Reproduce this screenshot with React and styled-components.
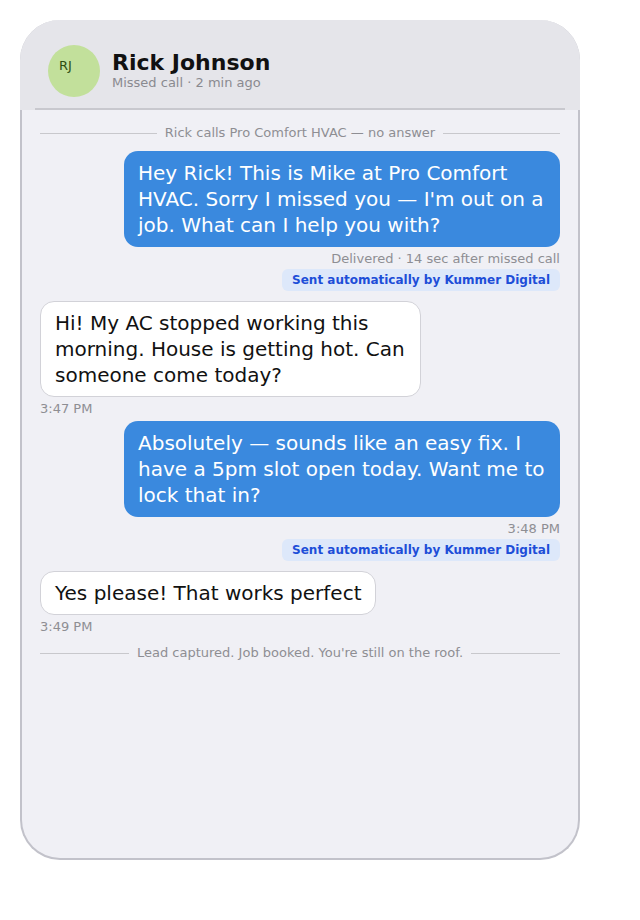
import React from 'react'
import styled, { createGlobalStyle } from 'styled-components'

const GlobalStyle = createGlobalStyle`
  body {
    margin: 0;
    background: #ffffff;
    font-family: "DejaVu Sans", Verdana, sans-serif;
  }
`

const messages = [
  { kind: 'divider', text: 'Rick calls Pro Comfort HVAC — no answer' },
  {
    kind: 'out',
    text: "Hey Rick! This is Mike at Pro Comfort HVAC. Sorry I missed you — I'm out on a job. What can I help you with?",
    meta: 'Delivered · 14 sec after missed call',
    auto: true
  },
  {
    kind: 'in',
    text: 'Hi! My AC stopped working this morning. House is getting hot. Can someone come today?',
    meta: '3:47 PM'
  },
  {
    kind: 'out',
    text: 'Absolutely — sounds like an easy fix. I have a 5pm slot open today. Want me to lock that in?',
    meta: '3:48 PM',
    auto: true
  },
  { kind: 'in', text: 'Yes please! That works perfect', meta: '3:49 PM' },
  { kind: 'divider', text: "Lead captured. Job booked. You're still on the roof." }
]

function App() {
  return (
    <Page>
      <GlobalStyle />
      <Phone>
        <Header>
          <Avatar>RJ</Avatar>
          <Contact>
            <Name>Rick Johnson</Name>
            <Status>Missed call · 2 min ago</Status>
          </Contact>
        </Header>

        <Thread>
          {messages.map((m, i) => {
            if (m.kind === 'divider') {
              return (
                <Divider key={i} $last={i > 0}>
                  <span>{m.text}</span>
                </Divider>
              )
            }
            const out = m.kind === 'out'
            return (
              <Group key={i} $out={out}>
                <Bubble $out={out}>{m.text}</Bubble>
                <Meta>{m.meta}</Meta>
                {m.auto && <AutoTag>Sent automatically by Kummer Digital</AutoTag>}
              </Group>
            )
          })}
        </Thread>
      </Phone>
    </Page>
  )
}

export default App

const Page = styled.div`
  padding: 20px;
`

const Phone = styled.div`
  width: 560px;
  height: 840px;
  box-sizing: border-box;
  background: #f0f0f5;
  border: 2px solid #c2c2ca;
  border-top: none;
  border-radius: 40px;
  display: flex;
  flex-direction: column;
`

const Header = styled.header`
  margin: 0 -2px;
  height: 90px;
  box-sizing: border-box;
  padding: 25px 28px 0;
  background: #e5e5ea;
  border-radius: 40px 40px 0 0;
  display: flex;
  align-items: flex-start;
  gap: 12px;
  position: relative;

  &::after {
    content: '';
    position: absolute;
    left: 15px;
    right: 15px;
    bottom: 0;
    height: 2px;
    background: #c8c8ce;
  }
`

const Avatar = styled.div`
  width: 52px;
  height: 52px;
  flex-shrink: 0;
  box-sizing: border-box;
  padding: 13px 0 0 11px;
  border-radius: 50%;
  background: #c2e09b;
  color: #2f4f14;
  font-size: 13px;
  line-height: 16px;
`

const Contact = styled.div`
  display: flex;
  flex-direction: column;
  padding-top: 5px;
`

const Name = styled.div`
  font-size: 22px;
  font-weight: bold;
  line-height: 26px;
  color: #111111;
`

const Status = styled.div`
  margin-top: -1px;
  font-size: 13px;
  line-height: 16px;
  color: #8a8a90;
`

const Thread = styled.div`
  flex: 1;
  padding: 15px 18px;
  display: flex;
  flex-direction: column;
`

const Divider = styled.div`
  display: flex;
  align-items: center;
  gap: 8px;
  font-size: 13px;
  line-height: 16px;
  color: #8e8e93;
  margin-top: ${p => (p.$last ? '10px' : '0')};

  &::before,
  &::after {
    content: '';
    flex: 1;
    height: 1px;
    background: #c8c8cc;
  }
`

const Group = styled.div`
  display: flex;
  flex-direction: column;
  align-items: ${p => (p.$out ? 'flex-end' : 'flex-start')};
  margin-top: 4px;

  &:nth-child(2) {
    margin-top: 10px;
  }
`

const Bubble = styled.div`
  max-width: ${p => (p.$out ? '436px' : '381px')};
  box-sizing: border-box;
  padding: ${p => (p.$out ? '9px 14px' : '8px 14px')};
  border-radius: 14px;
  font-size: 20px;
  line-height: 26px;
  background: ${p => (p.$out ? '#3a89de' : '#ffffff')};
  color: ${p => (p.$out ? '#ffffff' : '#111111')};
  border: ${p => (p.$out ? 'none' : '1px solid #d2d2d8')};
`

const Meta = styled.div`
  margin-top: 4px;
  font-size: 13px;
  line-height: 16px;
  color: #8e8e93;
`

const AutoTag = styled.div`
  margin: 2px 0 6px;
  padding: 0 10px;
  height: 22px;
  line-height: 22px;
  border-radius: 6px;
  background: #dde8fa;
  color: #1d4ed8;
  font-size: 12px;
  font-weight: bold;
`
